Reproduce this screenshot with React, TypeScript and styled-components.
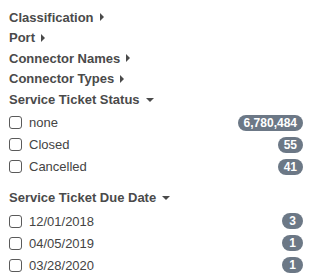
import React from "react";
import styled, { createGlobalStyle } from "styled-components";

const GlobalStyle = createGlobalStyle`
  body {
    margin: 0;
    background: #ffffff;
    font-family: "Liberation Sans", Arial, sans-serif;
  }
`;

const Panel = styled.div`
  display: flex;
  flex-direction: column;
  padding: 7px 12px 0 9px;
`;

const Facet = styled.div<{ $open?: boolean }>`
  display: flex;
  flex-direction: column;
  margin-bottom: ${(p) => (p.$open ? "10px" : "0")};
`;

const Heading = styled.div`
  display: flex;
  align-items: center;
  height: 20.5px;
  font-size: 13px;
  font-weight: bold;
  color: #4a4a4a;
  cursor: pointer;
`;

const Caret = styled.span<{ $open?: boolean }>`
  display: inline-block;
  margin-left: 6px;
  width: 0;
  height: 0;
  ${(p) =>
    p.$open
      ? `border-left: 4px solid transparent;
         border-right: 4px solid transparent;
         border-top: 4px solid #4a4a4a;
         margin-top: 1px;`
      : `border-top: 4px solid transparent;
         border-bottom: 4px solid transparent;
         border-left: 4px solid #4a4a4a;`}
`;

const List = styled.div`
  display: flex;
  flex-direction: column;
  padding-top: 2px;
`;

const Item = styled.label`
  display: flex;
  align-items: center;
  height: 22px;
  font-size: 13px;
  color: #444444;
`;

const Box = styled.span`
  width: 11px;
  height: 11px;
  border: 1px solid #5a5a5a;
  border-radius: 3px;
  margin-right: 7px;
  flex-shrink: 0;
`;

const Label = styled.span`
  flex: 1;
`;

const Badge = styled.span`
  min-width: 21px;
  height: 16px;
  box-sizing: border-box;
  padding: 0 6px;
  border-radius: 8px;
  background: #6c7886;
  color: #ffffff;
  font-size: 12px;
  font-weight: bold;
  line-height: 16px;
  text-align: center;
`;

type Entry = { label: string; count: string };

const facets: { title: string; open?: boolean; items?: Entry[] }[] = [
  { title: "Classification" },
  { title: "Port" },
  { title: "Connector Names" },
  { title: "Connector Types" },
  {
    title: "Service Ticket Status",
    open: true,
    items: [
      { label: "none", count: "6,780,484" },
      { label: "Closed", count: "55" },
      { label: "Cancelled", count: "41" },
    ],
  },
  {
    title: "Service Ticket Due Date",
    open: true,
    items: [
      { label: "12/01/2018", count: "3" },
      { label: "04/05/2019", count: "1" },
      { label: "03/28/2020", count: "1" },
    ],
  },
];

export default function App() {
  return (
    <>
      <GlobalStyle />
      <Panel>
        {facets.map((f) => (
          <Facet key={f.title} $open={f.open}>
            <Heading>
              {f.title}
              <Caret $open={f.open} />
            </Heading>
            {f.items && (
              <List>
                {f.items.map((it) => (
                  <Item key={it.label}>
                    <Box />
                    <Label>{it.label}</Label>
                    <Badge>{it.count}</Badge>
                  </Item>
                ))}
              </List>
            )}
          </Facet>
        ))}
      </Panel>
    </>
  );
}
